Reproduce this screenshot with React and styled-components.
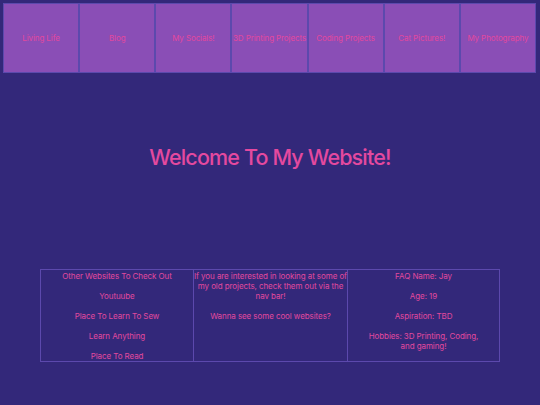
import React from "react";
import styled, { createGlobalStyle } from "styled-components";

const Global = createGlobalStyle`
  html, body { margin: 0; padding: 0; background: #33287a; }
  body { font-family: "Inter", "Lato", sans-serif; }
`;

const Page = styled.div`
  width: 540px;
  height: 405px;
  background: #33287a;
  display: flex;
  flex-direction: column;
  align-items: center;
  box-sizing: border-box;
  padding-top: 3px;
`;

const Nav = styled.nav`
  display: flex;
  width: 533px;
  margin-left: -1px;
`;

const NavItem = styled.a`
  flex: 1;
  height: 70px;
  box-sizing: border-box;
  border: 1px solid #5c49ad;
  background: #8a4eb6;
  color: #e2489e;
  font-size: 8px;
  display: flex;
  align-items: center;
  justify-content: center;
  text-decoration: none;
  white-space: nowrap;
  letter-spacing: -0.1px;
`;

const Heading = styled.h1`
  margin: 70px 0 0;
  height: 28px;
  line-height: 28px;
  font-size: 21.5px;
  font-weight: 500;
  letter-spacing: -0.85px;
  color: #e4499f;
`;

const Table = styled.div`
  margin-top: 98px;
  width: 460px;
  height: 93px;
  box-sizing: border-box;
  border-top: 1px solid #5c49ad;
  border-left: 1px solid #5c49ad;
  display: grid;
  grid-template-columns: 153px 154px 152px;
`;

const Cell = styled.div`
  border-right: 1px solid #5c49ad;
  border-bottom: 1px solid #5c49ad;
  display: flex;
  flex-direction: column;
  align-items: center;
  gap: 10px;
  padding: 1px 0 0;
  text-align: center;
`;

const Line = styled.p`
  margin: 0;
  font-size: 8px;
  line-height: 10px;
  color: #e2489e;
  white-space: nowrap;
  letter-spacing: -0.08px;
`;

const navItems = [
  "Living Life",
  "Blog",
  "My Socials!",
  "3D Printing Projects",
  "Coding Projects",
  "Cat Pictures!",
  "My Photography",
];

export default function App() {
  return (
    <>
      <Global />
      <Page>
        <Nav>
          {navItems.map((n) => (
            <NavItem key={n} href="#">{n}</NavItem>
          ))}
        </Nav>
        <Heading>Welcome To My Website!</Heading>
        <Table>
          <Cell>
            <Line>Other Websites To Check Out</Line>
            <Line>Youtuube</Line>
            <Line>Place To Learn To Sew</Line>
            <Line>Learn Anything</Line>
            <Line>Place To Read</Line>
          </Cell>
          <Cell>
            <Line>
              If you are interested in looking at some of
              <br />
              my old projects, check them out via the
              <br />
              nav bar!
            </Line>
            <Line>Wanna see some cool websites?</Line>
          </Cell>
          <Cell>
            <Line>FAQ Name: Jay</Line>
            <Line>Age: 19</Line>
            <Line>Aspiration: TBD</Line>
            <Line>
              Hobbies: 3D Printing, Coding,
              <br />
              and gaming!
            </Line>
          </Cell>
        </Table>
      </Page>
    </>
  );
}
